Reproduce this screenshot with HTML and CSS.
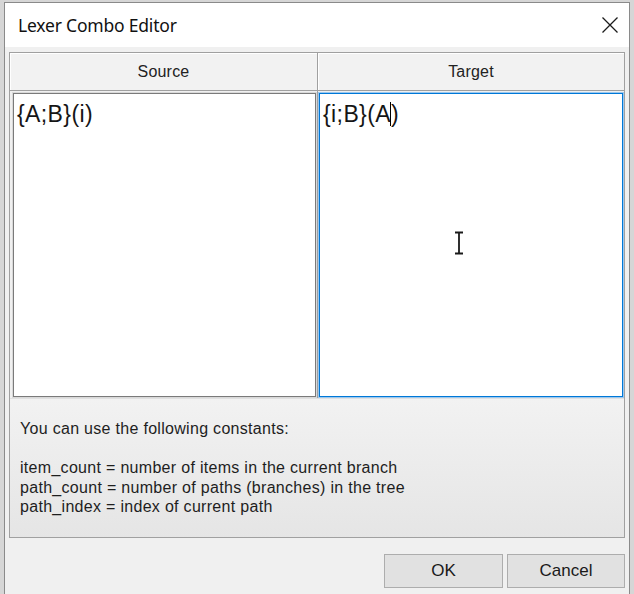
FILE: index.html
```html
<!DOCTYPE html>
<html lang="en">
  <head>
    <meta charset="UTF-8" />
    <meta name="viewport" content="width=device-width, initial-scale=1.0" />
    <title>Lexer Combo Editor</title>
    <link rel="stylesheet" href="styles.css">
  </head>
  <body>
    <div class="dialog">
      <header class="titlebar">
        <span class="title">Lexer Combo Editor</span>
        <button class="close" aria-label="Close">
          <svg width="16" height="16" viewBox="0 0 16 16">
            <path d="M0.5 0.5L15.5 15.5M15.5 0.5L0.5 15.5" stroke="#1b1b1b" stroke-width="1.3" fill="none" />
          </svg>
        </button>
      </header>
      <main class="client">
        <section class="panel">
          <div class="grid">
            <div class="head first">Source</div>
            <div class="head">Target</div>
            <div class="cell first">
              <div class="editor">{A;B}(i)</div>
            </div>
            <div class="cell">
              <div class="editor focused">{i;B}(A<span class="caret"></span>)</div>
              <!-- mouse pointer sitting over the target box -->
              <svg class="ibeam" width="12" height="24" viewBox="0 0 12 24">
                <path d="M2 1.5H10M2 22.5H10M6 1.5V22.5" stroke="#1a1a1a" stroke-width="1.8" fill="none" />
              </svg>
            </div>
          </div>
          <div class="info">
            <p>You can use the following constants:</p>
            <p>item_count = number of items in the current branch<br />path_count = number of paths (branches) in the tree<br />path_index = index of current path</p>
          </div>
        </section>
        <footer class="actions">
          <button class="btn ok">OK</button>
          <button class="btn">Cancel</button>
        </footer>
      </main>
    </div>
  </body>
</html>
```

FILE: styles.css
```css
* {
  box-sizing: border-box;
}

body {
  margin: 0;
  height: 594px;
  overflow: hidden;
  background: #d6d6d6;
  font-family: "Liberation Sans", Arial, sans-serif;
  color: #1a1a1a;
}

.dialog {
  margin: 2px 0 0 4px;
  width: 626px;
  height: 600px;
  border: 1px solid #8a8a8a;
  background: #f0f0f0;
  display: flex;
  flex-direction: column;
}

.titlebar {
  height: 44px;
  background: #fff;
  display: flex;
  align-items: center;
  justify-content: space-between;
  padding: 0 11px 0 13px;
}

.title {
  font-family: "Noto Sans", sans-serif;
  font-size: 17.5px;
  letter-spacing: -0.2px;
  color: #111;
}

.close {
  border: 0;
  background: none;
  padding: 0;
  width: 16px;
  height: 16px;
  display: flex;
}

.client {
  flex: 1;
  padding: 5px 4px 0 4px;
  background: #f0f0f0;
}

.panel {
  border: 1px solid #a0a0a0;
  background: #f0f0f0;
}

.grid {
  display: grid;
  grid-template-columns: 308px 1fr;
}

.head {
  height: 38px;
  border-bottom: 1px solid #a0a0a0;
  box-shadow: inset 1px 1px #fff;
  background: #f2f2f2;
  display: flex;
  align-items: center;
  justify-content: center;
  font-size: 16px;
  letter-spacing: 0.2px;
  color: #222;
}

.first {
  border-right: 1px solid #a0a0a0;
}

.cell {
  position: relative;
  height: 307px;
  padding: 2px 1px 1px 1px;
}

.cell.first {
  padding-left: 3px;
}

.editor {
  height: 304px;
  background: #fff;
  border: 1px solid #7a7a7a;
  box-shadow: 0 0 0 1px #d9d9d9;
  padding: 7px 3px;
  font-size: 23px;
  line-height: 26px;
  letter-spacing: 0.4px;
  color: #151515;
}

.editor.focused {
  border-color: #0078d7;
  box-shadow: 0 0 0 1px #9cc8ef;
}

.caret {
  display: inline-block;
  width: 1px;
  height: 24px;
  margin-left: -1px;
  background: #000;
  vertical-align: -4px;
}

.ibeam {
  position: absolute;
  left: 135px;
  top: 140px;
}

.info {
  height: 139px;
  padding: 20px 10px 0 10px;
  background: linear-gradient(#f2f2f2, #e5e5e5);
  border-top: 1px solid #e0e0e0;
  font-size: 16px;
  line-height: 19.5px;
  letter-spacing: 0.3px;
  color: #1e1e1e;
}

.info p {
  margin: 0 0 19.5px 0;
}

.actions {
  display: flex;
  justify-content: flex-end;
  gap: 4px;
  padding-top: 16px;
}

.btn {
  height: 34px;
  width: 118px;
  border: 1px solid #adadad;
  background: #e1e1e1;
  font-family: "Liberation Sans", Arial, sans-serif;
  font-size: 17px;
  color: #1a1a1a;
  padding: 0;
}

.btn.ok {
  width: 119px;
}
```
